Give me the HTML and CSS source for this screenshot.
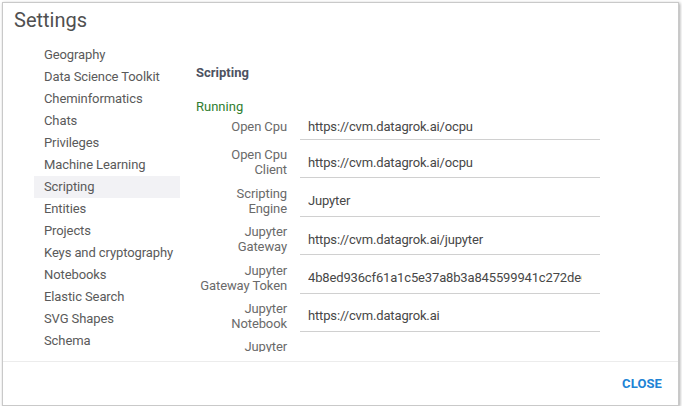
FILE: index.html
```html
<!DOCTYPE html>
<html>
<head>
<meta charset="utf-8">
<link rel="stylesheet" href="styles.css">
</head>
<body>
<div class="dialog">
  <div class="title">Settings</div>
  <div class="body">
    <ul class="nav">
      <li>Geography</li>
      <li>Data Science Toolkit</li>
      <li>Cheminformatics</li>
      <li>Chats</li>
      <li>Privileges</li>
      <li>Machine Learning</li>
      <li class="selected">Scripting</li>
      <li>Entities</li>
      <li>Projects</li>
      <li>Keys and cryptography</li>
      <li>Notebooks</li>
      <li>Elastic Search</li>
      <li>SVG Shapes</li>
      <li>Schema</li>
    </ul>
    <div class="content">
      <div class="heading">Scripting</div>
      <div class="group">Running</div>
      <div class="row">
        <div class="label">Open Cpu</div>
        <div class="input"><span class="value">https://cvm.datagrok.ai/ocpu</span></div>
      </div>
      <div class="row">
        <div class="label">Open Cpu<br>Client</div>
        <div class="input"><span class="value">https://cvm.datagrok.ai/ocpu</span></div>
      </div>
      <div class="row">
        <div class="label">Scripting<br>Engine</div>
        <div class="input"><span class="value">Jupyter</span></div>
      </div>
      <div class="row">
        <div class="label">Jupyter<br>Gateway</div>
        <div class="input"><span class="value">https://cvm.datagrok.ai/jupyter</span></div>
      </div>
      <div class="row">
        <div class="label">Jupyter<br>Gateway Token</div>
        <div class="input"><span class="value">4b8ed936cf61a1c5e37a8b3a845599941c272de6e0a1</span></div>
      </div>
      <div class="row">
        <div class="label">Jupyter<br>Notebook</div>
        <div class="input"><span class="value">https://cvm.datagrok.ai</span></div>
      </div>
      <div class="row">
        <div class="label">Jupyter<br>Notebook Token</div>
        <div class="input"><span class="value"></span></div>
      </div>
    </div>
  </div>
  <div class="footer">
    <span class="close">CLOSE</span>
  </div>
</div>
</body>
</html>
```

FILE: styles.css
```css
html, body {
  margin: 0;
  padding: 0;
  background: #ffffff;
}

body {
  font-family: Roboto, "Liberation Sans", sans-serif;
  font-size: 13px;
  color: #555;
}

.dialog {
  box-sizing: border-box;
  margin: 2px 0 0 2px;
  width: 677px;
  height: 404px;
  border: 1px solid #c9c9c9;
  box-shadow: 1px 1px 3px rgba(0, 0, 0, 0.35);
  background: #fff;
  display: flex;
  flex-direction: column;
}

.title {
  box-sizing: border-box;
  height: 41px;
  padding: 5px 11px 0;
  font-size: 20px;
  line-height: 24px;
  color: #505050;
}

.body {
  height: 308px;
  display: flex;
  overflow: hidden;
}

.nav {
  list-style: none;
  margin: 0 0 0 31px;
  padding: 0;
  width: 146px;
  flex: none;
}

.nav li {
  height: 22px;
  line-height: 22px;
  padding-left: 10px;
  color: #5a5a5a;
  white-space: nowrap;
  letter-spacing: -0.1px;
}

.nav li.selected {
  background: #f2f2f5;
}

.content {
  margin-left: 16px;
  width: 404px;
  flex: none;
}

.heading {
  margin-top: 21px;
  line-height: 15px;
  font-weight: bold;
  color: #4d5261;
}

.group {
  margin-top: 18.5px;
  line-height: 15px;
  color: #2f7d2f;
  margin-bottom: 0.5px;
}

.row {
  display: flex;
  align-items: stretch;
  margin-bottom: 7.4px;
}

.label {
  width: 91px;
  flex: none;
  box-sizing: border-box;
  padding-bottom: 1px;
  display: flex;
  flex-direction: column;
  justify-content: center;
  text-align: right;
  line-height: 15px;
  color: #6a6a6a;
  white-space: nowrap;
  letter-spacing: -0.1px;
}

.input {
  margin-left: 13px;
  width: 300px;
  flex: none;
  box-sizing: border-box;
  min-height: 26px;
  padding: 0 18px 0 8px;
  border-bottom: 1px solid #d0d0d0;
  display: flex;
  align-items: center;
  color: #474747;
}

.value {
  flex: 1;
  min-width: 0;
  overflow: hidden;
  white-space: nowrap;
  letter-spacing: -0.15px;
}

.footer {
  margin-top: 9px;
  border-top: 1px solid #ececec;
  flex: 1;
  display: flex;
  justify-content: flex-end;
  align-items: center;
  padding-right: 16px;
}

.close {
  font-weight: bold;
  font-size: 13px;
  color: #2083d5;
  letter-spacing: 0.1px;
}
```
